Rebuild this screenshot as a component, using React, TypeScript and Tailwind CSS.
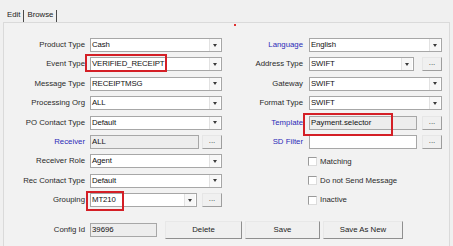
import React from 'react';

const Arrow = () => (
  <div className="flex items-center justify-center w-[11px] h-[12px] my-auto mr-[1px] bg-[#f7f7f7] border-l border-[#e2e2e2]">
    <div className="w-0 h-0 border-l-[2.5px] border-r-[2.5px] border-t-[3px] border-l-transparent border-r-transparent border-t-[#3a3a3a]" />
  </div>
);

const Combo = ({ value, width }: { value: string; width: string }) => (
  <div className={`flex h-[14px] bg-white border border-[#a7a7a7] ${width}`}>
    <div className="flex-1 pl-[1px] leading-[12px] tracking-[-0.1px] text-[#111] whitespace-nowrap overflow-hidden">{value}</div>
    <Arrow />
  </div>
);

const Ellipsis = () => (
  <div className="w-[20px] h-[14px] bg-[#f0f0f0] border border-[#e6e6e6] border-r-[#9e9e9e] border-b-[#9e9e9e] text-center leading-[9px] text-[#333]">
    ...
  </div>
);

const TextBox = ({ value, width, gray }: { value: string; width: string; gray?: boolean }) => (
  <div
    className={`h-[14px] border border-[#a7a7a7] pl-[1px] leading-[12px] text-[#111] whitespace-nowrap ${width} ${
      gray ? 'bg-[#ededed]' : 'bg-white'
    }`}
  >
    {value}
  </div>
);

const Label = ({ text, blue, width }: { text: string; blue?: boolean; width: string }) => (
  <div className={`${width} shrink-0 text-right leading-[14px] whitespace-nowrap ${blue ? 'text-[#2b2bb8]' : 'text-[#2a2a2a]'}`}>
    {text}
  </div>
);

const Check = ({ text }: { text: string }) => (
  <div className="flex items-center h-[14px] pl-[77px]">
    <div className="w-[9px] h-[9px] bg-white border border-[#9a9a9a] border-r-[#dcdcdc] border-b-[#dcdcdc]" />
    <span className="ml-[3px] text-[#2a2a2a]">{text}</span>
  </div>
);

const Button = ({ text, width }: { text: string; width: string }) => (
  <div
    className={`h-[18px] ${width} bg-[#f0f0f0] border border-[#e8e8e8] border-r-[#8f8f8f] border-b-[#8f8f8f] text-center leading-[16px] text-[#222]`}
  >
    {text}
  </div>
);

export default function App() {
  const L = 'w-[86px] pr-[5px]';
  const R = 'w-[78px] pr-[6px]';

  return (
    <div className="relative w-[453px] h-[246px] overflow-hidden bg-[#f0f0f0] font-['Liberation_Sans',Arial,sans-serif] text-[7.8px]">
      {/* tabs */}
      <div className="flex items-end h-[22px] pl-[6px]">
        <div className="h-[12px] px-[1px] pr-[3px] border-r border-[#4a4a4a] leading-[10px] text-[#222]">Edit</div>
        <div className="h-[12px] px-[3px] border-r border-[#4a4a4a] leading-[10px] text-[#222]">Browse</div>
      </div>

      {/* panel */}
      <div className="mx-[3px] h-[224px] bg-[#f2f2f2] border-t border-l border-r border-[#dadada] pt-[15px]">
        <div className="flex">
          <div className="w-[227px] flex flex-col gap-[5.4px]">
            <div className="flex">
              <Label text="Product Type" width={L} />
              <Combo value="Cash" width="w-[132px]" />
            </div>
            <div className="flex">
              <Label text="Event Type" width={L} />
              <Combo value="VERIFIED_RECEIPT" width="w-[132px]" />
            </div>
            <div className="flex">
              <Label text="Message Type" width={L} />
              <Combo value="RECEIPTMSG" width="w-[132px]" />
            </div>
            <div className="flex">
              <Label text="Processing Org" width={L} />
              <Combo value="ALL" width="w-[132px]" />
            </div>
            <div className="flex">
              <Label text="PO Contact Type" width={L} />
              <Combo value="Default" width="w-[132px]" />
            </div>
            <div className="flex">
              <Label text="Receiver" blue width={L} />
              <TextBox value="ALL" width="w-[109px]" gray />
              <div className="ml-[3px]">
                <Ellipsis />
              </div>
            </div>
            <div className="flex">
              <Label text="Receiver Role" width={L} />
              <Combo value="Agent" width="w-[132px]" />
            </div>
            <div className="flex">
              <Label text="Rec Contact Type" width={L} />
              <Combo value="Default" width="w-[132px]" />
            </div>
            <div className="flex">
              <Label text="Grouping" width={L} />
              <Combo value="MT210" width="w-[107px]" />
              <div className="ml-[5px]">
                <Ellipsis />
              </div>
            </div>
          </div>

          <div className="flex-1 flex flex-col gap-[5.4px]">
            <div className="flex">
              <Label text="Language" blue width={R} />
              <Combo value="English" width="w-[133px]" />
            </div>
            <div className="flex">
              <Label text="Address Type" width={R} />
              <Combo value="SWIFT" width="w-[105px]" />
              <div className="ml-[8px]">
                <Ellipsis />
              </div>
            </div>
            <div className="flex">
              <Label text="Gateway" width={R} />
              <Combo value="SWIFT" width="w-[133px]" />
            </div>
            <div className="flex">
              <Label text="Format Type" width={R} />
              <Combo value="SWIFT" width="w-[133px]" />
            </div>
            <div className="flex">
              <Label text="Template" blue width={R} />
              <TextBox value="Payment.selector" width="w-[108px]" gray />
              <div className="ml-[5px]">
                <Ellipsis />
              </div>
            </div>
            <div className="flex">
              <Label text="SD Filter" blue width={R} />
              <TextBox value="" width="w-[108px]" />
              <div className="ml-[5px]">
                <Ellipsis />
              </div>
            </div>
            <Check text="Matching" />
            <Check text="Do not Send Message" />
            <Check text="Inactive" />
          </div>
        </div>

        <div className="flex items-center mt-[14px]">
          <Label text="Config Id" width={L} />
          <TextBox value="39696" width="w-[67px]" gray />
          <div className="ml-[8px] flex gap-[3px]">
            <Button text="Delete" width="w-[77px]" />
            <Button text="Save" width="w-[75px]" />
            <Button text="Save As New" width="w-[80px]" />
          </div>
        </div>
      </div>

      {/* annotations */}
      <div className="absolute left-[234px] top-[24px] w-[2px] h-[2px] bg-[#e03030]" />
      <div className="absolute left-[85px] top-[54px] w-[82px] h-[18px] border-2 border-[#d41f26]" />
      <div className="absolute left-[303px] top-[113px] w-[90px] h-[23px] border-2 border-[#d41f26]" />
      <div className="absolute left-[86px] top-[191px] w-[38px] h-[20px] border-2 border-[#d41f26]" />
    </div>
  );
}
